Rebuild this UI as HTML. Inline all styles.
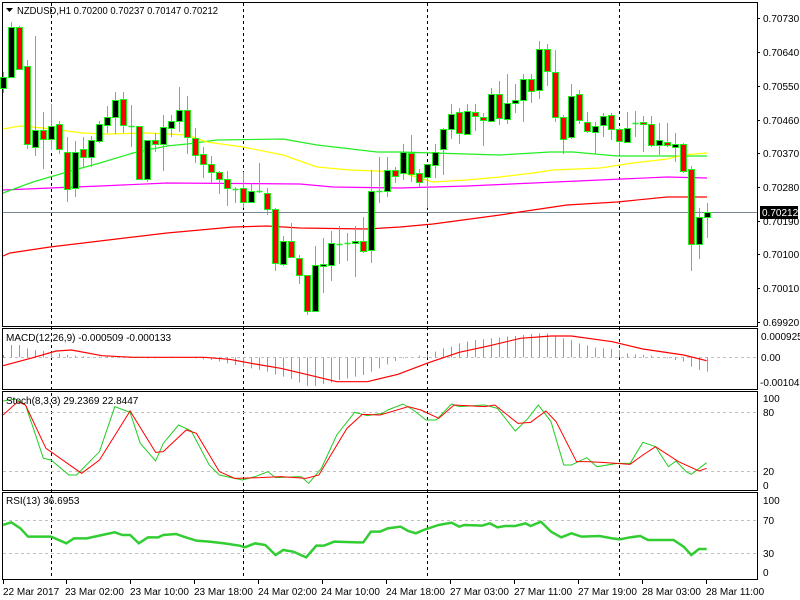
<!DOCTYPE html>
<html><head><meta charset="utf-8"><style>
html,body{margin:0;padding:0;background:#fff;width:800px;height:600px;overflow:hidden}
svg{display:block}
text{font-family:"Liberation Sans",sans-serif;font-size:10px;fill:#000}
.ns{vector-effect:non-scaling-stroke;fill:none}
</style></head><body>
<svg width="800" height="600" viewBox="0 0 800 600" xmlns="http://www.w3.org/2000/svg">
<!-- panel borders -->
<g fill="none" stroke="#000" stroke-width="1" shape-rendering="crispEdges">
<rect x="2.5" y="2.5" width="755" height="324"/>
<rect x="2.5" y="328.5" width="755" height="61"/>
<rect x="2.5" y="391.5" width="755" height="99"/>
<rect x="2.5" y="492.5" width="755" height="87"/>
</g>
<!-- vertical dashed separators -->
<g stroke="#000" stroke-dasharray="3,3" shape-rendering="crispEdges">
<line x1="51.5" y1="3" x2="51.5" y2="579"/>
<line x1="243.5" y1="3" x2="243.5" y2="579"/>
<line x1="427.5" y1="3" x2="427.5" y2="579"/>
<line x1="619.5" y1="3" x2="619.5" y2="579"/>
</g>
<!-- level dashed lines -->
<g stroke="#c0c0c0" stroke-dasharray="3,3" shape-rendering="crispEdges">
<line x1="3" y1="357.5" x2="757" y2="357.5"/>
<line x1="3" y1="412.5" x2="757" y2="412.5"/>
<line x1="3" y1="471.5" x2="757" y2="471.5"/>
<line x1="3" y1="520.5" x2="757" y2="520.5"/>
<line x1="3" y1="553.5" x2="757" y2="553.5"/>
</g>
<!-- price line -->
<line x1="3" y1="212.5" x2="757" y2="212.5" stroke="#778899" shape-rendering="crispEdges"/>
<!-- MAs -->
<g fill="none" stroke-width="1.2">
<polyline stroke="#ff0000" points="3,256 10,253 50,247 100,241 167,233 233,227 267,226 300,228 367,229 400,227 433,224 500,215 533,210 567,205 617,202 667,197 707,197"/>
<polyline stroke="#ff00ff" points="3,190 50,188 100,186 167,183 300,184 333,187 400,188 467,186 533,183 600,180 667,177 707,178"/>
<polyline stroke="#22ee22" points="3,193 33,182 67,172 100,163 133,153 167,146 187,144 217,140 283,139 317,145 377,152 400,152 500,155 550,152 573,152 617,156 707,156"/>
<polyline stroke="#ffff00" points="3,129 20,126 43,128 83,133 107,134 147,133 187,135 207,142 243,147 283,155 317,167 350,170 400,172 433,182 467,180 500,177 533,173 553,170 600,168 633,163 667,159 683,155 707,153"/>
</g>
<!-- wicks -->
<path stroke="#22ee22" stroke-width="1" fill="none" shape-rendering="crispEdges" d="M3.5 72V93M11.5 22V78M19.5 26V70M27.5 60V149M35.5 36V156M43.5 112V169M51.5 104V150M59.5 121V154M67.5 137V202M75.5 141V197M83.5 137V167M91.5 136V167M99.5 121V143M107.5 106V133M115.5 92V134M123.5 92V133M131.5 105V147M139.5 126V179M147.5 140V182M155.5 133V152M163.5 115V171M171.5 115V137M179.5 87V132M187.5 96V154M195.5 128V163M203.5 147V178M211.5 156V183M219.5 171V194M227.5 171V206M235.5 187V203M243.5 172V208M251.5 183V202M259.5 163V193M267.5 188V215M275.5 208V271M283.5 236V266M291.5 223V258M299.5 255V284M307.5 275V315M315.5 246V311M323.5 238V293M331.5 231V281M339.5 226V264M347.5 233V261M355.5 226V277M363.5 217V253M371.5 170V263M379.5 157V203M387.5 157V197M395.5 167V183M403.5 144V180M411.5 135V182M419.5 169V187M427.5 164V208M435.5 144V178M443.5 128V175M451.5 104V139M459.5 108V144M467.5 104V135M475.5 104V131M483.5 113V146M491.5 88V122M499.5 81V125M507.5 74V124M515.5 84V113M523.5 74V122M531.5 74V103M539.5 41V99M547.5 44V86M555.5 50V122M563.5 115V154M571.5 84V139M579.5 90V124M587.5 112V133M595.5 122V154M603.5 113V137M611.5 113V140M619.5 128V155M627.5 112V142M635.5 111V137M643.5 116V152M651.5 116V147M659.5 123V155M667.5 123V147M675.5 133V162M683.5 143V173M691.5 166V271M699.5 208V259M707.5 203V238"/>
<!-- dojis -->
<path stroke="#22ee22" stroke-width="1.5" fill="none" d="M128.5 126.5H134.5M232.5 189.5H238.5M256.5 191.5H262.5M336.5 244.5H342.5M344.5 243.5H350.5M376.5 191.5H382.5M632.5 123.5H638.5"/>
<!-- bodies -->
<g stroke="#22ee22" stroke-width="1" shape-rendering="crispEdges">
<g fill="#000">
<rect x="0.5" y="77.5" width="6" height="11"/>
<rect x="8.5" y="27.5" width="6" height="50"/>
<rect x="32.5" y="130.5" width="6" height="17"/>
<rect x="48.5" y="126.5" width="6" height="13"/>
<rect x="72.5" y="152.5" width="6" height="36"/>
<rect x="88.5" y="140.5" width="6" height="17"/>
<rect x="96.5" y="124.5" width="6" height="17"/>
<rect x="104.5" y="117.5" width="6" height="8"/>
<rect x="112.5" y="100.5" width="6" height="17"/>
<rect x="144.5" y="140.5" width="6" height="39"/>
<rect x="160.5" y="127.5" width="6" height="17"/>
<rect x="168.5" y="121.5" width="6" height="7"/>
<rect x="176.5" y="110.5" width="6" height="11"/>
<rect x="248.5" y="191.5" width="6" height="11"/>
<rect x="280.5" y="241.5" width="6" height="23"/>
<rect x="312.5" y="265.5" width="6" height="46"/>
<rect x="320.5" y="264.5" width="6" height="2"/>
<rect x="328.5" y="243.5" width="6" height="22"/>
<rect x="352.5" y="241.5" width="6" height="2"/>
<rect x="368.5" y="191.5" width="6" height="59"/>
<rect x="384.5" y="170.5" width="6" height="21"/>
<rect x="400.5" y="152.5" width="6" height="21"/>
<rect x="424.5" y="164.5" width="6" height="13"/>
<rect x="432.5" y="152.5" width="6" height="13"/>
<rect x="440.5" y="129.5" width="6" height="20"/>
<rect x="448.5" y="114.5" width="6" height="15"/>
<rect x="464.5" y="111.5" width="6" height="23"/>
<rect x="488.5" y="94.5" width="6" height="27"/>
<rect x="504.5" y="103.5" width="6" height="16"/>
<rect x="512.5" y="100.5" width="6" height="3"/>
<rect x="520.5" y="79.5" width="6" height="21"/>
<rect x="536.5" y="49.5" width="6" height="41"/>
<rect x="568.5" y="96.5" width="6" height="41"/>
<rect x="592.5" y="126.5" width="6" height="6"/>
<rect x="600.5" y="116.5" width="6" height="9"/>
<rect x="624.5" y="128.5" width="6" height="14"/>
<rect x="656.5" y="140.5" width="6" height="5"/>
<rect x="672.5" y="144.5" width="6" height="3"/>
<rect x="696.5" y="217.5" width="6" height="27"/>
<rect x="704.5" y="212.5" width="6" height="5"/>
</g>
<g fill="#ff0000">
<rect x="16.5" y="27.5" width="6" height="42"/>
<rect x="24.5" y="66.5" width="6" height="78"/>
<rect x="40.5" y="130.5" width="6" height="9"/>
<rect x="56.5" y="124.5" width="6" height="25"/>
<rect x="64.5" y="152.5" width="6" height="37"/>
<rect x="80.5" y="149.5" width="6" height="8"/>
<rect x="120.5" y="99.5" width="6" height="26"/>
<rect x="136.5" y="126.5" width="6" height="53"/>
<rect x="152.5" y="140.5" width="6" height="4"/>
<rect x="184.5" y="110.5" width="6" height="27"/>
<rect x="192.5" y="138.5" width="6" height="17"/>
<rect x="200.5" y="154.5" width="6" height="10"/>
<rect x="208.5" y="164.5" width="6" height="8"/>
<rect x="216.5" y="172.5" width="6" height="7"/>
<rect x="224.5" y="179.5" width="6" height="9"/>
<rect x="240.5" y="188.5" width="6" height="14"/>
<rect x="264.5" y="193.5" width="6" height="16"/>
<rect x="272.5" y="209.5" width="6" height="54"/>
<rect x="288.5" y="241.5" width="6" height="16"/>
<rect x="296.5" y="258.5" width="6" height="17"/>
<rect x="304.5" y="275.5" width="6" height="36"/>
<rect x="360.5" y="241.5" width="6" height="10"/>
<rect x="392.5" y="170.5" width="6" height="6"/>
<rect x="408.5" y="153.5" width="6" height="21"/>
<rect x="416.5" y="173.5" width="6" height="9"/>
<rect x="456.5" y="112.5" width="6" height="21"/>
<rect x="472.5" y="112.5" width="6" height="4"/>
<rect x="480.5" y="117.5" width="6" height="3"/>
<rect x="496.5" y="94.5" width="6" height="24"/>
<rect x="528.5" y="79.5" width="6" height="12"/>
<rect x="544.5" y="49.5" width="6" height="22"/>
<rect x="552.5" y="72.5" width="6" height="45"/>
<rect x="560.5" y="117.5" width="6" height="22"/>
<rect x="576.5" y="94.5" width="6" height="26"/>
<rect x="584.5" y="122.5" width="6" height="9"/>
<rect x="608.5" y="115.5" width="6" height="14"/>
<rect x="616.5" y="129.5" width="6" height="12"/>
<rect x="640.5" y="122.5" width="6" height="2"/>
<rect x="648.5" y="124.5" width="6" height="21"/>
<rect x="664.5" y="142.5" width="6" height="3"/>
<rect x="680.5" y="144.5" width="6" height="27"/>
<rect x="688.5" y="169.5" width="6" height="75"/>
</g>
</g>
<!-- title -->
<path d="M6 8h7l-3.5 4z" fill="#000"/>
<text x="17" y="14" textLength="201" lengthAdjust="spacingAndGlyphs">NZDUSD,H1  0.70200 0.70237 0.70147 0.70212</text>
<!-- right axis main -->
<g shape-rendering="crispEdges" stroke="#000">
<path d="M757 18.5h3M757 52.5h3M757 86.5h3M757 120.5h3M757 153.5h3M757 187.5h3M757 221.5h3M757 254.5h3M757 288.5h3M757 322.5h3"/>
</g>
<g>
<text x="763" y="22">0.70730</text>
<text x="763" y="56">0.70640</text>
<text x="763" y="90">0.70550</text>
<text x="763" y="124">0.70460</text>
<text x="763" y="157">0.70370</text>
<text x="763" y="191">0.70280</text>
<text x="763" y="225">0.70190</text>
<text x="763" y="258">0.70100</text>
<text x="763" y="292">0.70010</text>
<text x="763" y="326">0.69920</text>
</g>
<rect x="760" y="206" width="38" height="13" fill="#000"/>
<text x="762" y="216" style="fill:#fff">0.70212</text>
<!-- MACD histogram -->
<g transform="translate(0,325) scale(1,0.33333)">
<path class="ns" stroke="#22ee22" stroke-width="1" d="M3.5 97V90M11.5 97V60M19.5 97V60M27.5 97V70M35.5 97V75M43.5 97V78M51.5 97V80M59.5 97V85M67.5 97V90M75.5 97V92M83.5 97V94M91.5 97V96M99.5 97V95M107.5 97V95M115.5 97V96M123.5 97V96M131.5 97V95M139.5 97V96M147.5 97V100M155.5 97V100M163.5 97V99M171.5 97V99M179.5 97V98M187.5 97V99M195.5 97V100M203.5 97V103M211.5 97V105M219.5 97V110M227.5 97V115M235.5 97V120M243.5 97V125M251.5 97V130M259.5 97V135M267.5 97V140M275.5 97V148M283.5 97V155M291.5 97V162M299.5 97V172M307.5 97V183M315.5 97V183M323.5 97V177M331.5 97V172M339.5 97V165M347.5 97V160M355.5 97V155M363.5 97V150M371.5 97V140M379.5 97V130M387.5 97V118M395.5 97V108M403.5 97V100M411.5 97V98M419.5 97V92M427.5 97V88M435.5 97V80M443.5 97V70M451.5 97V65M459.5 97V55M467.5 97V50M475.5 97V45M483.5 97V43M491.5 97V40M499.5 97V38M507.5 97V35M515.5 97V33M523.5 97V30M531.5 97V27M539.5 97V25M547.5 97V25M555.5 97V35M563.5 97V40M571.5 97V45M579.5 97V55M587.5 97V62M595.5 97V68M603.5 97V70M611.5 97V72M619.5 97V75M627.5 97V85M635.5 97V88M643.5 97V90M651.5 97V92M659.5 97V96M667.5 97V100M675.5 97V105M683.5 97V110M691.5 97V125M699.5 97V135M707.5 97V140"/>
</g>
<g transform="matrix(0.5102,0,0,0.33333,0,325)">
<polyline class="ns" stroke="#ff0000" stroke-width="1.2" points="6,122 60,100 110,78 140,75 200,92 260,97 400,97 450,103 500,117 550,130 600,148 660,170 720,170 780,148 840,113 900,82 960,62 1020,40 1080,33 1120,33 1200,50 1260,72 1340,90 1385,107"/>
<!-- stoch -->
<polyline class="ns" stroke="#22cc22" stroke-width="1" points="6,228 30,222 50,240 85,400 100,405 135,450 150,450 195,380 225,245 255,262 275,355 305,408 320,355 350,300 375,318 410,420 430,450 475,465 500,455 525,440 540,458 590,455 605,475 630,430 660,330 695,262 720,272 750,265 760,255 790,237 810,255 835,285 855,285 885,237 900,245 950,240 975,250 1010,318 1035,280 1055,240 1080,290 1105,420 1120,420 1150,398 1170,425 1210,415 1235,415 1260,352 1285,365 1310,425 1325,408 1345,440 1355,448 1385,413"/>
<polyline class="ns" stroke="#ff0000" stroke-width="1" points="6,270 35,230 50,240 90,370 160,445 195,405 255,258 305,382 320,380 365,315 385,325 430,440 460,460 510,458 550,455 600,460 625,450 680,310 710,268 745,270 800,245 825,255 860,280 890,240 950,245 970,240 1015,295 1040,292 1070,258 1090,290 1130,410 1150,410 1180,412 1235,418 1260,390 1285,365 1330,410 1370,438 1385,430"/>
<!-- RSI -->
<polyline class="ns" stroke="#32cd32" stroke-width="2.5" points="6,600 22,592 40,610 55,635 100,635 130,655 145,640 170,640 200,630 225,622 240,630 255,630 272,655 290,637 310,637 320,630 345,627 360,635 385,647 410,650 440,655 470,662 480,667 500,655 520,660 540,690 555,675 575,680 600,697 620,662 635,662 655,650 700,652 712,652 727,620 745,620 760,610 785,605 800,618 815,625 830,615 860,600 885,593 900,605 910,600 945,602 960,595 975,607 990,603 1010,603 1030,595 1040,603 1060,590 1080,620 1100,637 1120,625 1140,635 1175,633 1200,640 1215,643 1235,637 1255,633 1270,645 1320,645 1340,665 1355,690 1370,672 1385,672"/>
</g>
<!-- indicator labels -->
<text x="6" y="341">MACD(12,26,9) -0.000509 -0.000133</text>
<text x="6" y="404">Stoch(8,3,3) 29.2369 22.8447</text>
<text x="6" y="504">RSI(13) 36.6953</text>
<text x="761" y="340">0.000925</text>
<text x="761" y="361">0.00</text>
<text x="760" y="386">-0.001043</text>
<text x="763" y="402">100</text>
<text x="763" y="416">80</text>
<text x="763" y="475">20</text>
<text x="763" y="489">0</text>
<text x="763" y="504">100</text>
<text x="763" y="524">70</text>
<text x="763" y="557">30</text>
<text x="763" y="576">0</text>
<!-- time ticks and labels -->
<path stroke="#000" shape-rendering="crispEdges" d="M3.5 580v4M66.5 580v4M130.5 580v4M194.5 580v4M258.5 580v4M322.5 580v4M386.5 580v4M450.5 580v4M514.5 580v4M578.5 580v4M642.5 580v4M706.5 580v4"/>
<g>
<text x="3" y="595">22 Mar 2017</text>
<text x="65" y="595">23 Mar 02:00</text>
<text x="130" y="595">23 Mar 10:00</text>
<text x="194" y="595">23 Mar 18:00</text>
<text x="258" y="595">24 Mar 02:00</text>
<text x="321" y="595">24 Mar 10:00</text>
<text x="386" y="595">24 Mar 18:00</text>
<text x="450" y="595">27 Mar 03:00</text>
<text x="514" y="595">27 Mar 11:00</text>
<text x="578" y="595">27 Mar 19:00</text>
<text x="642" y="595">28 Mar 03:00</text>
<text x="706" y="595">28 Mar 11:00</text>
</g>
</svg>
</body></html>
